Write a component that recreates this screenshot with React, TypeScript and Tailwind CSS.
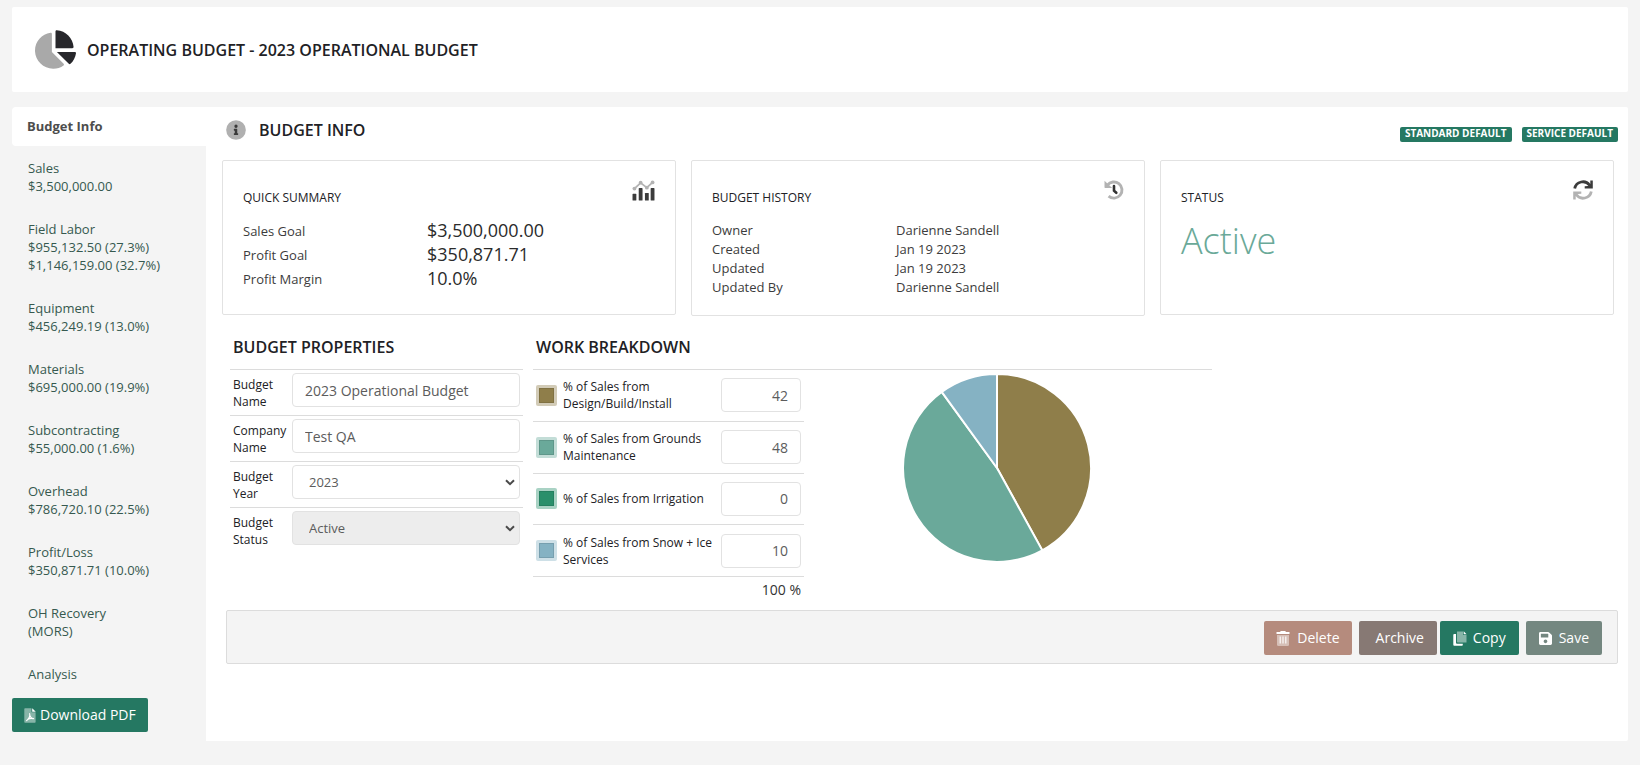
import { useState } from "react";
import type { ReactNode } from "react";

const navItems = [
  { label: "Sales", lines: ["$3,500,000.00"] },
  { label: "Field Labor", lines: ["$955,132.50 (27.3%)", "$1,146,159.00 (32.7%)"] },
  { label: "Equipment", lines: ["$456,249.19 (13.0%)"] },
  { label: "Materials", lines: ["$695,000.00 (19.9%)"] },
  { label: "Subcontracting", lines: ["$55,000.00 (1.6%)"] },
  { label: "Overhead", lines: ["$786,720.10 (22.5%)"] },
  { label: "Profit/Loss", lines: ["$350,871.71 (10.0%)"] },
  { label: "OH Recovery", lines: ["(MORS)"] },
  { label: "Analysis", lines: [] },
];

const summary = [
  ["Sales Goal", "$3,500,000.00"],
  ["Profit Goal", "$350,871.71"],
  ["Profit Margin", "10.0%"],
];

const history = [
  ["Owner", "Darienne Sandell"],
  ["Created", "Jan 19 2023"],
  ["Updated", "Jan 19 2023"],
  ["Updated By", "Darienne Sandell"],
];

const workTypes = [
  { id: "design", label: "% of Sales from Design/Build/Install", value: 42, color: "#8f7e4a", ring: "#d2cbb7" },
  { id: "grounds", label: "% of Sales from Grounds Maintenance", value: 48, color: "#6aa99a", ring: "#c3ddd7" },
  { id: "irrigation", label: "% of Sales from Irrigation", value: 0, color: "#2a8f6b", ring: "#a9d2c4" },
  { id: "snow", label: "% of Sales from Snow + Ice Services", value: 10, color: "#85b2c3", ring: "#cee0e7" },
];

const inputClass =
  "h-[34px] w-full min-w-0 rounded border border-[#e2e2e2] bg-white text-[#5c5c5c] outline-none focus:border-[#257862]";

/* ---------- icons ---------- */

function ChartPieIcon() {
  return (
    <svg viewBox="0 0 544 512" className="h-[39px] w-[41px] shrink-0" aria-hidden="true">
      <path
        fill="#a9a9a9"
        d="M224 288V50.71c0-9.55-8.39-17.4-17.84-16.06C86.99 51.49-4.1 155.6.14 280.37 4.5 408.51 114.83 513.59 243.03 511.98c50.4-.63 96.97-16.87 135.26-44.03 7.9-5.6 8.42-17.23 1.57-24.08L224 288z"
      />
      <path
        fill="#27272b"
        d="M527.79 288H290.5l158.03 158.03c6.04 6.04 15.98 6.53 22.19.68 38.7-36.46 65.32-85.61 73.13-140.86 1.34-9.46-6.51-17.85-16.06-17.85zM511.96 223.2C503.72 103.74 408.26 8.28 288.8.04 279.68-.59 272 7.1 272 16.24V240h223.77c9.14 0 16.82-7.68 16.19-16.8z"
      />
    </svg>
  );
}

function InfoIcon() {
  return (
    <svg viewBox="0 0 512 512" className="size-5 shrink-0" aria-hidden="true">
      <circle cx="256" cy="256" r="252" fill="#b0b0b0" />
      <path
        fill="#3a3a3a"
        d="M256 118a42 42 0 1 1 0 84 42 42 0 0 1 0-84zm56 254c0 6.6-5.4 12-12 12h-88c-6.6 0-12-5.4-12-12v-24c0-6.6 5.4-12 12-12h12v-64h-12c-6.6 0-12-5.4-12-12v-24c0-6.6 5.4-12 12-12h64c6.6 0 12 5.4 12 12v100h12c6.6 0 12 5.4 12 12v24z"
      />
    </svg>
  );
}

function AnalyticsIcon() {
  return (
    <svg viewBox="0 0 24 22" className="h-[21px] w-[23px]" aria-hidden="true">
      <path d="M2.5 9L9 3l6.5 5L21.5 2.5" fill="none" stroke="#b3b3b3" strokeWidth="1.9" />
      <g fill="#b3b3b3">
        <circle cx="2.5" cy="9" r="2" />
        <circle cx="9" cy="2.8" r="2" />
        <circle cx="15.5" cy="8" r="2" />
        <circle cx="21.5" cy="2.5" r="2" />
      </g>
      <g fill="#3c3c3c">
        <rect x="0.5" y="14.5" width="4" height="7" rx="0.6" />
        <rect x="7" y="8.5" width="4" height="13" rx="0.6" />
        <rect x="13.5" y="13.5" width="4" height="8" rx="0.6" />
        <rect x="19.5" y="8.5" width="4" height="13" rx="0.6" />
      </g>
    </svg>
  );
}

function HistoryIcon() {
  return (
    <svg viewBox="0 0 20 20" className="size-5" aria-hidden="true">
      <path d="M3.4 5.2A8.1 8.1 0 1 1 4.6 16.2" fill="none" stroke="#b3b3b3" strokeWidth="2.9" />
      <path d="M0.5 0.8L0.500 7.3Q0.500 7.900 1.100 7.900L8.200 7.900Z" fill="#b3b3b3" />
      <path d="M10 6V10.600L12.300 12.800" fill="none" stroke="#333" strokeWidth="2.600" strokeLinecap="round" />
    </svg>
  );
}

function RefreshIcon() {
  return (
    <svg viewBox="0 0 20 20" className="size-5" aria-hidden="true">
      <path d="M1.7 8.500A8.300 8.300 0 0 1 16.600 5.300" fill="none" stroke="#3c3c3c" strokeWidth="2.800" />
      <path d="M19.800 0.400V8.500H11.700V6.200L14.800 6L17.300 3.700V0.400Z" fill="#3c3c3c" />
      <path d="M18.300 11.500A8.300 8.300 0 0 1 3.400 14.700" fill="none" stroke="#b3b3b3" strokeWidth="2.800" />
      <path d="M0.200 19.600V11.500H8.300V13.800L5.200 14L2.700 16.300V19.600Z" fill="#b3b3b3" />
    </svg>
  );
}

function TrashIcon() {
  return (
    <svg viewBox="0 0 14 15" className="h-[15px] w-[14px]" aria-hidden="true">
      <path d="M1 4H13V13.500Q13 15 11.500 15H2.500Q1 15 1 13.500Z" fill="#fff" opacity="0.45" />
      <path d="M4.200 5.500V12.500M7 5.500V12.500M9.800 5.500V12.500" stroke="#fff" strokeWidth="1.100" />
      <path d="M0.500 1H4L4.800 0H9.200L10 1H13.500V3H0.500Z" fill="#fff" />
    </svg>
  );
}

function CopyIcon() {
  return (
    <svg viewBox="0 0 14 15" className="h-[15px] w-[14px]" aria-hidden="true">
      <path d="M4 0.500H10V4H13.500V11.500H4.800Q4 11.500 4 10.700Z" fill="#fff" opacity="0.45" />
      <path d="M10.700 0.200L13.600 3.200H10.700Z" fill="#fff" />
      <path d="M3 3H1.200Q0.300 3 0.300 3.900V13.800Q0.300 14.700 1.200 14.700H9Q9.800 14.700 9.800 13.800V12.700H4Q3 12.700 3 11.700Z" fill="#fff" />
    </svg>
  );
}

function SaveIcon() {
  return (
    <svg viewBox="0 32 448 448" className="size-[13px]" aria-hidden="true">
      <path
        fill="#fff"
        d="M433.941 129.941l-83.882-83.882A48 48 0 0 0 316.118 32H48C21.49 32 0 53.49 0 80v352c0 26.51 21.49 48 48 48h352c26.51 0 48-21.49 48-48V163.882a48 48 0 0 0-14.059-33.941zM224 416c-35.346 0-64-28.654-64-64s28.654-64 64-64 64 28.654 64 64-28.654 64-64 64zm96-304.52V212c0 6.627-5.373 12-12 12H76c-6.627 0-12-5.373-12-12V108c0-6.627 5.373-12 12-12h228.52c3.183 0 6.235 1.264 8.485 3.515l3.48 3.48A11.996 11.996 0 0 1 320 111.48z"
      />
    </svg>
  );
}

function PdfIcon() {
  return (
    <svg viewBox="0 0 12 15" className="h-[15px] w-3" aria-hidden="true">
      <path d="M1 0.300H7.500V4.200H11.600V14Q11.600 14.700 10.900 14.700H1Q0.300 14.700 0.300 14V1Q0.300 0.300 1 0.300Z" fill="#fff" opacity="0.45" />
      <path d="M8.200 0.200L11.800 3.700H8.200Z" fill="#fff" />
      <path d="M5.600 5.500C6.300 8.500 5 10.800 2.600 12.600C3.500 11 6.500 10 9.600 10.600C7.500 10.500 5.800 8.600 5.600 5.500Z" fill="none" stroke="#fff" strokeWidth="1.100" strokeLinejoin="round" />
    </svg>
  );
}

/* ---------- pieces ---------- */

function Card({ title, icon, children }: { title: string; icon: ReactNode; children: ReactNode }) {
  return (
    <section className="min-h-[155px] rounded-xs border border-[#e2e2e2] px-5 pt-[19px] pb-[18px]">
      <div className="flex h-[26px] items-start justify-between">
        <h3 className="self-end text-xs text-[#212125]">{title}</h3>
        {icon}
      </div>
      {children}
    </section>
  );
}

function PieChart() {
  const total = workTypes.reduce((sum, w) => sum + w.value, 0);
  const r = 94;
  let start = 0;
  const slices = workTypes
    .filter((w) => w.value > 0)
    .map((w) => {
      const a0 = (start / total) * 2 * Math.PI;
      start += w.value;
      const a1 = (start / total) * 2 * Math.PI;
      const large = a1 - a0 > Math.PI ? 1 : 0;
      const d = `M0 0L${r * Math.sin(a0)} ${-r * Math.cos(a0)}A${r} ${r} 0 ${large} 1 ${r * Math.sin(a1)} ${-r * Math.cos(a1)}Z`;
      return { id: w.id, color: w.color, d };
    });

  return (
    <svg viewBox="-95 -95 190 190" className="size-[190px]" role="img" aria-label="Work breakdown">
      {slices.map((s) => (
        <path key={s.id} d={s.d} fill={s.color} stroke="#fff" strokeWidth="2" />
      ))}
    </svg>
  );
}

function SelectBox({ id, value, disabled }: { id: string; value: string; disabled?: boolean }) {
  return (
    <div className="relative">
      <select
        id={id}
        disabled={disabled}
        defaultValue={value}
        className="h-[34px] w-full appearance-none rounded border border-[#e2e2e2] bg-white px-4 pt-px text-[13px] text-[#5c5c5c] disabled:bg-[#ededed] disabled:opacity-100"
      >
        <option>{value}</option>
      </select>
      <svg viewBox="0 0 10 7" className="pointer-events-none absolute top-[14px] right-[5px] h-[7px] w-[10px]" aria-hidden="true">
        <path d="M1 1.2L5 5.2L9 1.2" fill="none" stroke="#4a4a4a" strokeWidth="2" />
      </svg>
    </div>
  );
}

function PropertyRow({ id, label, children }: { id: string; label: string; children: ReactNode }) {
  return (
    <div className="flex h-[46px] border-t border-[#dcdcdc] px-[3px] pt-[3px]">
      <label htmlFor={id} className="w-[59px] shrink-0 pt-[3px] text-xs leading-[17px] text-[#212125]">
        {label}
      </label>
      <div className="flex-1">{children}</div>
    </div>
  );
}

export default function App() {
  const [name, setName] = useState("2023 Operational Budget");
  const [company, setCompany] = useState("Test QA");

  return (
    <div className="min-h-screen bg-[#f4f4f4] px-3 pt-[7px] pb-6 font-['Open_Sans',sans-serif] text-[13px] text-[#212125]">
      <header className="flex h-[85px] items-center gap-[11px] rounded-xs bg-white px-[23px]">
        <ChartPieIcon />
        <h1 className="text-base font-semibold">OPERATING BUDGET - 2023 OPERATIONAL BUDGET</h1>
      </header>

      <div className="mt-[15px] flex">
        <aside className="w-[194px] shrink-0">
          <nav>
            <a href="#info" className="flex h-[39px] items-center rounded-l bg-white px-[15px] font-bold text-[#4d4d4d]">
              Budget Info
            </a>
            {navItems.map((item) => (
              <a
                key={item.label}
                href={`#${item.label}`}
                className="block px-4 pt-[13px] pb-3 leading-[18px] text-[#36594f] hover:underline"
              >
                <span className="block">{item.label}</span>
                {item.lines.map((line) => (
                  <span key={line} className="block">{line}</span>
                ))}
              </a>
            ))}
          </nav>
          <button type="button" className="mt-[3px] flex h-[34px] items-center gap-1 rounded-xs bg-[#257862] px-3 text-sm text-white">
            <PdfIcon />
            Download PDF
          </button>
        </aside>

        <main className="min-w-0 flex-1 rounded-r-xs bg-white px-[10px] pb-[77px]">
          <div className="flex h-[53px] items-start justify-between pl-[10px]">
            <div className="flex h-[45px] items-center gap-[13px]">
              <InfoIcon />
              <h2 className="text-base font-semibold">BUDGET INFO</h2>
            </div>
            <div className="flex gap-[10px] pt-5 text-[10px] leading-[13px] font-bold text-white">
              <span className="rounded-xs bg-[#257862] px-[5px] pb-[2px]">STANDARD DEFAULT</span>
              <span className="rounded-xs bg-[#257862] px-[5px] pb-[2px]">SERVICE DEFAULT</span>
            </div>
          </div>

          <div className="grid grid-cols-3 items-start gap-[15px] pr-1 pl-[6px]">
            <Card title="QUICK SUMMARY" icon={<AnalyticsIcon />}>
              <dl className="pt-[13px]">
                {summary.map(([k, v]) => (
                  <div key={k} className="flex h-6 items-start">
                    <dt className="w-[184px] leading-6 text-[#3c3c3c]">{k}</dt>
                    <dd className="text-lg leading-[22px] font-medium text-[#2b2b2b]">{v}</dd>
                  </div>
                ))}
              </dl>
            </Card>
            <Card title="BUDGET HISTORY" icon={<HistoryIcon />}>
              <dl className="pt-[15px]">
                {history.map(([k, v]) => (
                  <div key={k} className="flex leading-[19px] text-[#3c3c3c]">
                    <dt className="w-[184px]">{k}</dt>
                    <dd>{v}</dd>
                  </div>
                ))}
              </dl>
            </Card>
            <Card title="STATUS" icon={<RefreshIcon />}>
              <p className="pt-[15px] text-4xl font-light text-[#6aa998]">Active</p>
            </Card>
          </div>

          <div className="mt-4 flex items-start gap-[10px] pl-[14px]">
            <form className="w-[293px] shrink-0">
              <h2 className="flex h-[37px] items-start px-[3px] pt-[3px] text-base font-semibold">BUDGET PROPERTIES</h2>
              <PropertyRow id="budget-name" label="Budget Name">
                <input
                  id="budget-name"
                  value={name}
                  onChange={(e) => setName(e.target.value)}
                  className={`${inputClass} px-3 text-sm`}
                />
              </PropertyRow>
              <PropertyRow id="company-name" label="Company Name">
                <input
                  id="company-name"
                  value={company}
                  onChange={(e) => setCompany(e.target.value)}
                  className={`${inputClass} px-3 text-sm`}
                />
              </PropertyRow>
              <PropertyRow id="budget-year" label="Budget Year">
                <SelectBox id="budget-year" value="2023" />
              </PropertyRow>
              <PropertyRow id="budget-status" label="Budget Status">
                <SelectBox id="budget-status" value="Active" disabled />
              </PropertyRow>
            </form>

            <section className="w-[679px] shrink-0">
              <h2 className="flex h-[37px] items-start px-[3px] pt-[3px] text-base font-semibold">WORK BREAKDOWN</h2>
              <div className="flex border-t border-[#dcdcdc]">
                <div className="w-[271px] shrink-0">
                  <div className="grid h-[207px] auto-rows-fr">
                    {workTypes.map((w) => (
                      <div key={w.id} className="flex items-center border-b border-[#dcdcdc] px-[3px]">
                        <span
                          className="flex size-[21px] shrink-0 items-center justify-center rounded-xs"
                          style={{ backgroundColor: w.ring }}
                        >
                          <span className="size-[15px] border border-black/10" style={{ backgroundColor: w.color }} />
                        </span>
                        <label htmlFor={w.id} className="ml-[6px] w-[158px] text-xs leading-[17px]">
                          {w.label}
                        </label>
                        <div className="w-20">
                          <input id={w.id} defaultValue={w.value} className={`${inputClass} px-3 text-right text-sm`} />
                        </div>
                      </div>
                    ))}
                  </div>
                  <p className="px-[3px] pt-[3px] text-right text-sm leading-5 text-[#333]">100 %</p>
                </div>
                <div className="flex flex-1 justify-center pt-[3px] pr-[22px]">
                  <PieChart />
                </div>
              </div>
            </section>
          </div>

          <div className="mt-[10px] ml-[10px] flex h-[54px] items-center justify-end rounded-xs border border-[#dcdcdc] bg-[#f4f4f4] pt-[2px] pr-[15px] text-sm text-white">
            <button type="button" className="flex h-[34px] items-center gap-[7px] rounded-xs bg-[#b58b7d] px-3">
              <TrashIcon />
              Delete
            </button>
            <button type="button" className="ml-[7px] h-[34px] rounded-xs bg-[#877974] pr-[13px] pl-[17px]">
              Archive
            </button>
            <button type="button" className="ml-[3px] flex h-[34px] items-center gap-[6px] rounded-xs bg-[#257862] px-[13px]">
              <CopyIcon />
              Copy
            </button>
            <button type="button" className="ml-[7px] flex h-[34px] items-center gap-[7px] rounded-xs bg-[#748780] px-[13px]">
              <SaveIcon />
              Save
            </button>
          </div>
        </main>
      </div>
    </div>
  );
}
